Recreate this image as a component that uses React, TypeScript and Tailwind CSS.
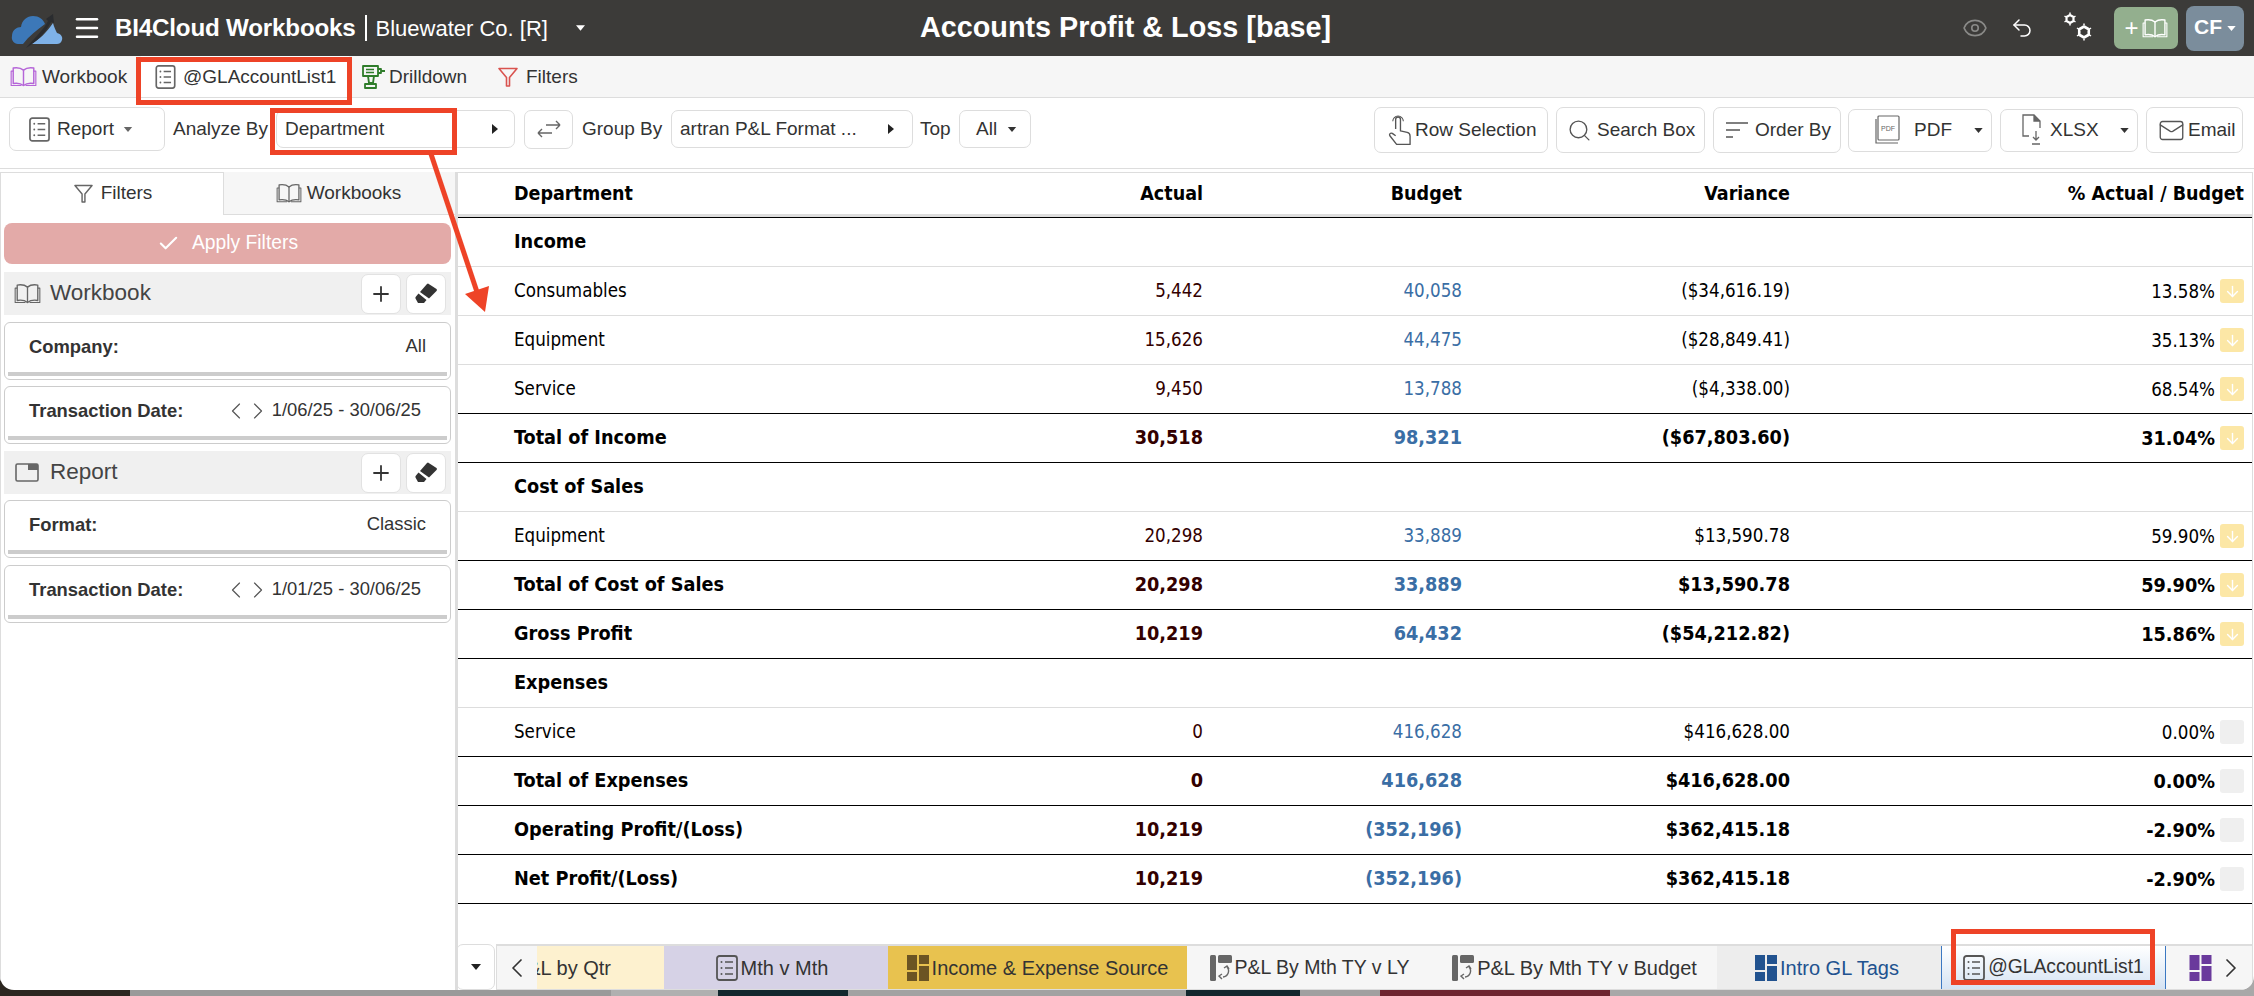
import React from "react";
import { Menu, Eye, Undo2, Check, Plus, ChevronLeft, ChevronRight, Search, Mail, ArrowDown } from "lucide-react";

const Caret = ({ c = "#333", w = 10, h = 6, cls = "" }: { c?: string; w?: number; h?: number; cls?: string }) => (
  <svg width={w} height={h} viewBox="0 0 10 6" className={cls}><polygon points="0,0 10,0 5,6" fill={c} /></svg>
);
const CaretR = () => (
  <svg width="6" height="10" viewBox="0 0 6 10"><polygon points="0,0 6,5 0,10" fill="#222" /></svg>
);
const Book = ({ s = 26, c = "#666", sw = 1.6 }: { s?: number; c?: string; sw?: number }) => (
  <svg width={s} height={s * 0.8} viewBox="0 0 26 21" fill="none" stroke={c} strokeWidth={sw} strokeLinejoin="round">
    <path d="M13 4 C10 1.5 6 1.5 3 2 L3 17 C6 16.5 10 16.5 13 19 C16 16.5 20 16.5 23 17 L23 2 C20 1.5 16 1.5 13 4Z" />
    <path d="M13 4 L13 19" />
    <path d="M3 5 L1 5 L1 19 L11 19 M23 5 L25 5 L25 19 L15 19" strokeWidth={sw * 0.8} />
  </svg>
);
const ListBox = ({ w = 22, h = 26, c = "#666" }: { w?: number; h?: number; c?: string }) => (
  <svg width={w} height={h} viewBox="0 0 22 26" fill="none">
    <rect x="1" y="1" width="20" height="24" rx="2.5" stroke={c} strokeWidth="1.8" />
    <path d="M9 7H17M9 13H17M9 19H17" stroke={c} strokeWidth="1.5" />
    <circle cx="5.5" cy="7" r="1" fill={c} /><circle cx="5.5" cy="13" r="1" fill={c} /><circle cx="5.5" cy="19" r="1" fill={c} />
  </svg>
);
const Funnel = ({ s = 20, c = "#666", sw = 1.8 }: { s?: number; c?: string; sw?: number }) => (
  <svg width={s} height={s} viewBox="0 0 20 20" fill="none" stroke={c} strokeWidth={sw} strokeLinejoin="round">
    <path d="M1 1.5H19L11.5 10.5V19H8.5V10.5Z" />
  </svg>
);
const Drill = () => (
  <svg width="24" height="26" viewBox="0 0 24 26" fill="none" stroke="#2f7d2b" strokeWidth="1.8" strokeLinejoin="round">
    <path d="M2 2H17V12H2Z" /><path d="M17 5H20V9H17M20 7H24" /><path d="M5 5.5H13M5 8.5H13" strokeWidth="1.3" />
    <path d="M7 12L8 19H12L13 12" /><path d="M4 20H15V24H4Z" />
  </svg>
);
const Layout = ({ c, w = 22, h = 26 }: { c: string; w?: number; h?: number }) => (
  <svg width={w} height={h} viewBox="0 0 22 26">
    <rect x="0" y="0" width="10" height="15" fill={c} /><rect x="12" y="0" width="10" height="9" fill={c} />
    <rect x="0" y="17" width="10" height="9" fill={c} /><rect x="12" y="11" width="10" height="15" fill={c} />
  </svg>
);
const PL = () => (
  <svg width="22" height="26" viewBox="0 0 22 26" fill="none">
    <rect x="0" y="0" width="6" height="26" rx="1.5" fill="#666" /><rect x="8" y="0" width="14" height="8" rx="1.5" fill="#666" />
    <path d="M17 12 A6 6 0 0 1 13 22M12 24L9 21L12 19M19 14L17 11L14 13" stroke="#666" strokeWidth="1.4" />
  </svg>
);
const Eraser = () => (
  <svg width="24" height="22" viewBox="0 0 24 22">
    <path d="M14 0.5 L22.5 6 Q23.5 7 22.5 8 L15 15.5 L6 9 L13 1 Q13.5 0.5 14 0.5Z" fill="#333" />
    <path d="M4.5 10.5 L12.5 17 L10 20 L4 20 L1.5 15.5 Q1 14.5 2 13.5Z" fill="#333" />
  </svg>
);
const Hex = ({ x, y, r, sw }: { x: number; y: number; r: number; sw: number }) => {
  const pts = [0, 1, 2, 3, 4, 5].map((i) => {
    const a = (Math.PI / 3) * i - Math.PI / 2;
    return `${x + r * Math.cos(a)},${y + r * Math.sin(a)}`;
  }).join(" ");
  return <polygon points={pts} fill="none" stroke="#fff" strokeWidth={sw} strokeLinejoin="round" />;
};
const Gears = () => (
  <svg width="30" height="30" viewBox="0 0 30 30">
    <Hex x={6} y={7} r={4} sw={2.2} /><Hex x={20} y={20} r={5.5} sw={2.6} />
    <path d="M6 0.5V2M6 12V13.500M0.500 4L2 5M10 9L11.500 10M0.500 10L2 9M10 5L11.500 4" stroke="#fff" strokeWidth="1.500" />
    <path d="M20 11.500V13M20 27V28.500M13 16L14.500 17M25.500 23L27 24M13 24L14.500 23M25.500 17L27 16" stroke="#fff" strokeWidth="1.500" />
  </svg>
);
const Logo = () => (
  <svg width="60" height="50" viewBox="0 0 60 50">
    <path d="M9 32 C9 26 14 23 18 23 C19 16 24 12 30 12 C36 12 40 15 42 20 C34 26 26 32 20 40 L15 40 C11 40 8 36 9 32Z" fill="#3c78b8" />
    <path d="M50 19 C51 23 53 27 54 29 C58 30 60 33 59 36 C58 39 56 40 54 40 L28 40 C36 36 44 28 50 19Z" fill="#7fb2e8" />
    <path d="M23 44 C30 35 40 27 45 17 L43 15 L50 10 L51 19 L48 18 C43 28 34 38 23 44Z" fill="#2a2c2f" />
  </svg>
);

type Row = { l: string; k: "h" | "i" | "t"; line: "g" | "b"; a?: string; b?: string; v?: string; p?: string; f?: "y" | "g" };
const rows: Row[] = [
  { l: "Income", k: "h", line: "g" },
  { l: "Consumables", k: "i", line: "g", a: "5,442", b: "40,058", v: "($34,616.19)", p: "13.58%", f: "y" },
  { l: "Equipment", k: "i", line: "g", a: "15,626", b: "44,475", v: "($28,849.41)", p: "35.13%", f: "y" },
  { l: "Service", k: "i", line: "b", a: "9,450", b: "13,788", v: "($4,338.00)", p: "68.54%", f: "y" },
  { l: "Total of Income", k: "t", line: "b", a: "30,518", b: "98,321", v: "($67,803.60)", p: "31.04%", f: "y" },
  { l: "Cost of Sales", k: "h", line: "g" },
  { l: "Equipment", k: "i", line: "b", a: "20,298", b: "33,889", v: "$13,590.78", p: "59.90%", f: "y" },
  { l: "Total of Cost of Sales", k: "t", line: "b", a: "20,298", b: "33,889", v: "$13,590.78", p: "59.90%", f: "y" },
  { l: "Gross Profit", k: "t", line: "b", a: "10,219", b: "64,432", v: "($54,212.82)", p: "15.86%", f: "y" },
  { l: "Expenses", k: "h", line: "g" },
  { l: "Service", k: "i", line: "b", a: "0", b: "416,628", v: "$416,628.00", p: "0.00%", f: "g" },
  { l: "Total of Expenses", k: "t", line: "b", a: "0", b: "416,628", v: "$416,628.00", p: "0.00%", f: "g" },
  { l: "Operating Profit/(Loss)", k: "t", line: "b", a: "10,219", b: "(352,196)", v: "$362,415.18", p: "-2.90%", f: "g" },
  { l: "Net Profit/(Loss)", k: "t", line: "b", a: "10,219", b: "(352,196)", v: "$362,415.18", p: "-2.90%", f: "g" },
];

const gridCls = "grid grid-cols-[560px_185px_259px_328px_425px_37px] items-center";

function TableRow({ r }: { r: Row }) {
  const bold = r.k !== "i";
  return (
    <div className={`${gridCls} h-[49px] border-b ${r.line === "b" ? "border-black" : "border-[#dddddd]"} ${bold ? "font-bold text-[19.7px]" : "text-[18.6px]"}`}>
      <div className="pl-14 text-black">{r.l}</div>
      <div className="text-right text-[#330000]">{r.a}</div>
      <div className="text-right text-[#3a6ea5]">{r.b}</div>
      <div className="text-right text-black">{r.v}</div>
      <div className="text-right text-black pt-[2px]">{r.p}</div>
      {r.f ? (
        <div className="pl-[5px]">
          <div className={`w-6 h-6 rounded-[3px] flex items-center justify-center ${r.f === "y" ? "bg-[#fce7a6]" : "bg-[#efefef]"}`}>
            {r.f === "y" && <ArrowDown size={17} color="#ffffff" strokeWidth={2} />}
          </div>
        </div>
      ) : <div />}
    </div>
  );
}

const SectionHead = ({ icon, title }: { icon: React.ReactNode; title: string }) => (
  <div className="h-[43px] bg-[#f0f0f0] flex items-center pl-[9px] pr-[5px]">
    <div className="w-[28px] flex justify-center">{icon}</div>
    <div className="ml-[9px] text-[22.5px] text-[#444] flex-1 -mt-[2px]">{title}</div>
    <div className="w-[40px] h-[40px] rounded-[7px] bg-white border border-[#e2e2e2] flex items-center justify-center"><Plus size={24} color="#333" strokeWidth={1.8} /></div>
    <div className="ml-[5px] w-[40px] h-[40px] rounded-[7px] bg-white border border-[#e2e2e2] flex items-center justify-center"><Eraser /></div>
  </div>
);

const FilterCard = ({ label, value, nav }: { label: string; value: string; nav?: boolean }) => (
  <div className="h-[58px] border border-[#cccccc] rounded-[6px] bg-white px-[3px] pb-[3px] flex flex-col">
    <div className="flex-1 flex items-center pl-[21px] pr-[21px] -mt-[1px]">
      <div className="font-bold text-[18.4px] text-[#333] flex-1">{label}</div>
      {nav && (
        <div className="flex items-center">
          <ChevronLeft size={28} color="#555" strokeWidth={1} />
          <ChevronRight size={28} color="#555" strokeWidth={1} className="-ml-[6px]" />
        </div>
      )}
      <div className={`text-[18.4px] text-[#333] -mt-[2px] ${nav ? "mr-[5px]" : ""}`}>{value}</div>
    </div>
    <div className="h-[4px] bg-[#cccccc]" />
  </div>
);

const TbBtn = ({ children, cls }: { children: React.ReactNode; cls: string }) => (
  <div className={`flex items-center border border-[#dddddd] rounded-[7px] bg-white shrink-0 ${cls}`}>{children}</div>
);

const BTab = ({ cls, children }: { cls: string; children: React.ReactNode }) => (
  <div className={`h-full flex items-center gap-[3px] shrink-0 text-[20px] ${cls}`}>{children}</div>
);

export default function App() {
  return (
    <div className="relative w-[2254px] h-[996px] overflow-hidden font-['Liberation_Sans',Arial,sans-serif] text-[#333] text-[19px] bg-[#999999]">
      {/* desktop peeking out below the window */}
      <div className="absolute left-0 right-0 bottom-0 h-[20px] flex">
        <div className="w-[130px] bg-[#2c2620]" />
        <div className="w-[481px] bg-[#9a9a9a]" />
        <div className="w-[107px] bg-[#b0b0b0]" />
        <div className="w-[130px] bg-[#12282e]" />
        <div className="w-[338px] bg-[#a2a2a2]" />
        <div className="w-[114px] bg-[#12282e]" />
        <div className="w-[80px] bg-[#a0a0a0]" />
        <div className="w-[230px] bg-[#6e2530]" />
        <div className="flex-1 bg-[#a8a8a8]" />
      </div>

      <div className="relative w-full h-[990px] bg-white rounded-b-[14px] overflow-hidden flex flex-col">
        {/* Top bar */}
        <div className="relative h-[56px] bg-[#3c3b39] flex items-center shrink-0 text-white">
          <div className="ml-[3px] mt-[2px]"><Logo /></div>
          <div className="ml-[9px]"><Menu size={30} color="#fff" strokeWidth={2} /></div>
          <div className="ml-[13px] font-bold text-[24.2px] tracking-[-0.2px]">BI4Cloud Workbooks</div>
          <div className="ml-[9px] w-[2px] h-[26px] bg-white" />
          <div className="ml-[9px] text-[22px]">Bluewater Co. [R]</div>
          <Caret c="#fff" w={9} h={6} cls="ml-[28px]" />
          <div className="flex justify-center absolute left-0 right-0 pointer-events-none">
            <div className="font-bold text-[28.8px] ml-[-3px]">Accounts Profit &amp; Loss [base]</div>
          </div>
          <div className="ml-auto flex items-center">
            <Eye size={26} color="#8a8a88" strokeWidth={1.5} />
            <div className="ml-[22px]"><Undo2 size={24} color="#fff" strokeWidth={1.5} /></div>
            <div className="ml-[30px] -mt-[2px]"><Gears /></div>
            <div className="ml-[20px] w-[64px] h-[42px] bg-[#93af8e] rounded-[7px] flex items-center justify-center gap-[3px]">
              <span className="text-[24px] font-light">+</span><Book s={26} c="#fff" sw={1.4} />
            </div>
            <div className="ml-[8px] mr-[10px] w-[58px] h-[45px] bg-[#7b8d9c] rounded-[8px] flex items-center justify-center gap-[5px]">
              <span className="font-bold text-[21px] -mt-[3px]">CF</span><Caret c="#fff" w={9} h={5} />
            </div>
          </div>
        </div>

        {/* Tab bar */}
        <div className="h-[42px] bg-[#f6f6f6] flex items-stretch shrink-0 border-b border-[#dddddd] pl-[10px]">
          <div className="flex items-center w-[131px] shrink-0 pt-[1px]"><Book s={27} c="#b565d8" sw={1.4} /><span className="ml-[5px] text-[19px]">Workbook</span></div>
          <div className="flex items-center w-[208px] shrink-0 bg-white pl-[14px] pt-[1px] -mt-[1px] border-t border-[#cccccc]"><ListBox w={21} h={24} /><span className="ml-[7px]">@GLAccountList1</span></div>
          <div className="flex items-center ml-[12px] w-[137px] shrink-0 pt-[1px]"><Drill /><span className="ml-[4px]">Drilldown</span></div>
          <div className="flex items-center shrink-0 pt-[1px]"><Funnel s={20} c="#d9534f" sw={1.6} /><span className="ml-[8px]">Filters</span></div>
        </div>

        {/* Toolbar */}
        <div className="h-[71px] shrink-0 border-b border-[#dddddd] px-[9px] pt-[9px] pr-[11px]">
          <div className="flex items-center h-[46px]">
            <TbBtn cls="w-[156px] h-[44px] pl-[19px] -mt-[2px]"><ListBox w={21} h={25} /><span className="ml-[7px]">Report</span><Caret c="#666" w={10} h={5} cls="ml-[9px]" /></TbBtn>
            <span className="ml-[8px] w-[103px] shrink-0 -mt-[2px]">Analyze By</span>
            <TbBtn cls="w-[239px] h-[38px] pl-[8px] pr-[16px] justify-between -mt-[2px] bg-white"><span>Department</span><CaretR /></TbBtn>
            <TbBtn cls="ml-[9px] w-[49px] h-[39px] justify-center -mt-[2px]">
              <svg width="24" height="24" viewBox="0 0 24 24" fill="none" stroke="#666" strokeWidth="1.4"><path d="M1 16H15M1 16L5 12M1 16L5 20" /><path d="M9 8H23M23 8L19 4M23 8L19 12" /></svg>
            </TbBtn>
            <span className="ml-[9px] w-[89px] shrink-0 -mt-[2px]">Group By</span>
            <TbBtn cls="w-[242px] h-[38px] pl-[8px] pr-[18px] justify-between -mt-[2px]"><span className="whitespace-nowrap">artran P&amp;L Format ...</span><CaretR /></TbBtn>
            <span className="ml-[7px] w-[39px] shrink-0 -mt-[2px]">Top</span>
            <TbBtn cls="w-[72px] h-[38px] pl-[16px] -mt-[2px]"><span>All</span><Caret c="#333" w={10} h={5} cls="ml-[10px]" /></TbBtn>

            <div className="ml-auto flex items-center">
              <TbBtn cls="w-[174px] h-[46px] pl-[12px]">
                <svg width="25" height="32" viewBox="0 0 26 32" fill="none" stroke="#555" strokeWidth="1.4" strokeLinejoin="round"><path d="M9 15V5a2.5 2.5 0 0 1 5 0V17l7 1.5c2 .5 3 2 3 4V31H10L3 22c-1-1.500 .5-3.500 2.500-2.500L9 22" /><path d="M6 7a5.500 5.500 0 0 1 11 0" strokeWidth="1.100" /></svg>
                <span className="ml-[3px]">Row Selection</span>
              </TbBtn>
              <TbBtn cls="ml-[8px] w-[149px] h-[46px] pl-[10px]"><Search size={25} color="#555" strokeWidth={1.3} /><span className="ml-[5px]">Search Box</span></TbBtn>
              <TbBtn cls="ml-[8px] w-[128px] h-[46px] pl-[12px]">
                <svg width="22" height="18" viewBox="0 0 22 18" stroke="#555" strokeWidth="1.5"><path d="M0 2H22M0 9H14M0 16H7" /></svg>
                <span className="ml-[7px]">Order By</span>
              </TbBtn>
              <TbBtn cls="ml-[7px] w-[144px] h-[43px] pl-[26px]">
                <svg width="25" height="30" viewBox="0 0 25 30" fill="none" stroke="#666" strokeWidth="1.2"><rect x="3" y="1" width="21" height="24" rx="1" /><path d="M1 4V28H23" /><text x="6" y="16" fontSize="7" fill="#666" stroke="none" fontFamily="Liberation Sans">PDF</text></svg>
                <span className="ml-[14px]">PDF</span><Caret c="#333" w={9} h={5} cls="ml-auto mr-[8px]" />
              </TbBtn>
              <TbBtn cls="ml-[8px] w-[138px] h-[43px] pl-[21px]">
                <svg width="20" height="32" viewBox="0 0 20 32" fill="none" stroke="#666" strokeWidth="1.3"><path d="M7 22H1V1H12L18 7V14" /><path d="M12 1V7H18" fill="#666" /><path d="M14 17V26M11 23L14 26L17 23M10 30H18" /></svg>
                <span className="ml-[8px]">XLSX</span><Caret c="#333" w={9} h={5} cls="ml-auto mr-[8px]" />
              </TbBtn>
              <TbBtn cls="ml-[8px] w-[97px] h-[46px] pl-[11px]"><Mail size={27} color="#555" strokeWidth={1.2} /><span className="ml-[3px]">Email</span></TbBtn>
            </div>
          </div>
        </div>

        {/* Main */}
        <div className="flex-1 min-h-0 flex mt-[3px] border-t border-[#dddddd] mr-[1px]">
          {/* Sidebar */}
          <div className="w-[458px] shrink-0 border-l border-[#dddddd] border-r-[3px] border-r-[#dddddd] flex flex-col">
            <div className="h-[42px] flex shrink-0">
              <div className="w-[222px] flex items-center justify-center gap-[8px] pl-[4px] -mt-[1px]"><Funnel s={19} c="#666" sw={1.5} /><span className="mr-[2px]">Filters</span></div>
              <div className="flex-1 bg-[#f6f6f6] border-l border-b border-[#dddddd] flex items-center justify-center gap-[5px] -mt-[1px] pr-[2px]"><Book s={26} c="#666" sw={1.3} /><span>Workbooks</span></div>
            </div>
            <div className="pl-[3px] pr-[4px] pt-[8px]">
              <div className="h-[41px] bg-[#e3aaa8] rounded-[8px] flex items-center justify-center text-white">
                <Check size={23} color="#fff" strokeWidth={2.2} />
                <span className="ml-[12px] text-[19.300px]">Apply Filters</span>
              </div>
              <div className="mt-[8px]"><SectionHead icon={<Book s={27} c="#666" sw={1.3} />} title="Workbook" /></div>
              <div className="mt-[7px]"><FilterCard label="Company:" value="All" /></div>
              <div className="mt-[6px]"><FilterCard label="Transaction Date:" value="1/06/25 - 30/06/25" nav /></div>
              <div className="mt-[7px]">
                <SectionHead
                  icon={<svg width="24" height="19" viewBox="0 0 24 19" fill="none"><rect x="1" y="1" width="22" height="17" rx="1.500" stroke="#666" strokeWidth="1.600" /><rect x="13" y="1" width="10" height="6" fill="#666" /></svg>}
                  title="Report"
                />
              </div>
              <div className="mt-[6px]"><FilterCard label="Format:" value="Classic" /></div>
              <div className="mt-[7px]"><FilterCard label="Transaction Date:" value="1/01/25 - 30/06/25" nav /></div>
            </div>
          </div>

          {/* Content */}
          <div className="flex-1 min-w-0 flex flex-col border-r border-[#dddddd]">
            <div className="flex-1 min-h-0 font-['DejaVu_Sans_Condensed','DejaVu_Sans',sans-serif]">
              <div className={`${gridCls} h-[44px] border-b-[3px] border-[#dddddd] font-bold text-black text-[19.5px] pt-[1px]`}>
                <div className="pl-14">Department</div>
                <div className="text-right">Actual</div>
                <div className="text-right">Budget</div>
                <div className="text-right">Variance</div>
                <div className="col-span-2 text-right pr-[8px]">% Actual / Budget</div>
              </div>
              <div className="border-t border-black">
                {rows.map((r, i) => <TableRow key={i} r={r} />)}
              </div>
            </div>

            {/* Bottom tabs */}
            <div className="h-[46px] shrink-0 flex text-[#333]">
              <div className="w-[39px] h-full border border-[#dddddd] rounded-[7px] flex items-center justify-center shrink-0 -ml-[2px]"><Caret c="#222" w={10} h={6} /></div>
              <div className="flex-1 min-w-0 flex border-t-2 border-b border-l border-[#dddddd] ml-[1px]">
                <div className="w-[40px] flex items-center justify-center bg-[#f6f6f6] shrink-0"><ChevronLeft size={32} color="#333" strokeWidth={1.3} /></div>
                <BTab cls="w-[127px] bg-[#fdf1cf] overflow-hidden justify-end pr-[53px]"><span className="whitespace-nowrap shrink-0">P&amp;L by Qtr</span></BTab>
                <BTab cls="w-[224px] bg-[#d6d2e6] justify-center pr-[8px]"><ListBox w={22} h={26} c="#555" /><span>Mth v Mth</span></BTab>
                <BTab cls="w-[299px] bg-[#e8c24f] justify-center"><Layout c="#6b5423" /><span>Income &amp; Expense Source</span></BTab>
                <BTab cls="w-[245px] bg-[#f6f6f6] justify-center"><PL /><span className="text-[19.5px]">P&amp;L By Mth TY v LY</span></BTab>
                <BTab cls="w-[285px] bg-[#f6f6f6] justify-center"><PL /><span>P&amp;L By Mth TY v Budget</span></BTab>
                <BTab cls="w-[224px] bg-[#ededed] text-[#21528f] justify-center pr-[4px]"><Layout c="#21528f" /><span>Intro GL Tags</span></BTab>
                <BTab cls="w-[225px] bg-gradient-to-b from-white to-[#d5e3f3] border-x border-[#3b78c2] justify-center"><ListBox w={22} h={26} c="#555" /><span className="text-[19.3px]">@GLAccountList1</span></BTab>
                <div className="flex-1 flex items-center bg-[#f6f6f6] pl-[23px]"><Layout c="#6a3a9c" w={23} h={26} /><ChevronRight size={32} color="#333" strokeWidth={1.3} className="ml-[3px]" /></div>
              </div>
            </div>
          </div>
        </div>

        {/* Annotations */}
        <div className="absolute left-[136px] top-[57px] w-[216px] h-[48px] border-[5px] border-[#ee4327] pointer-events-none" />
        <div className="absolute left-[270px] top-[108px] w-[187px] h-[47px] border-[5px] border-[#ee4327] pointer-events-none" />
        <div className="absolute left-[1951px] top-[929px] w-[204px] h-[56px] border-[5px] border-[#ee4327] pointer-events-none" />
        <svg className="absolute left-0 top-0 pointer-events-none" width="2254" height="990" viewBox="0 0 2254 990">
          <line x1="431" y1="154" x2="477" y2="292" stroke="#ee4327" strokeWidth="5" />
          <polygon points="465,294 489,286 485,312" fill="#ee4327" />
        </svg>
      </div>
    </div>
  );
}
